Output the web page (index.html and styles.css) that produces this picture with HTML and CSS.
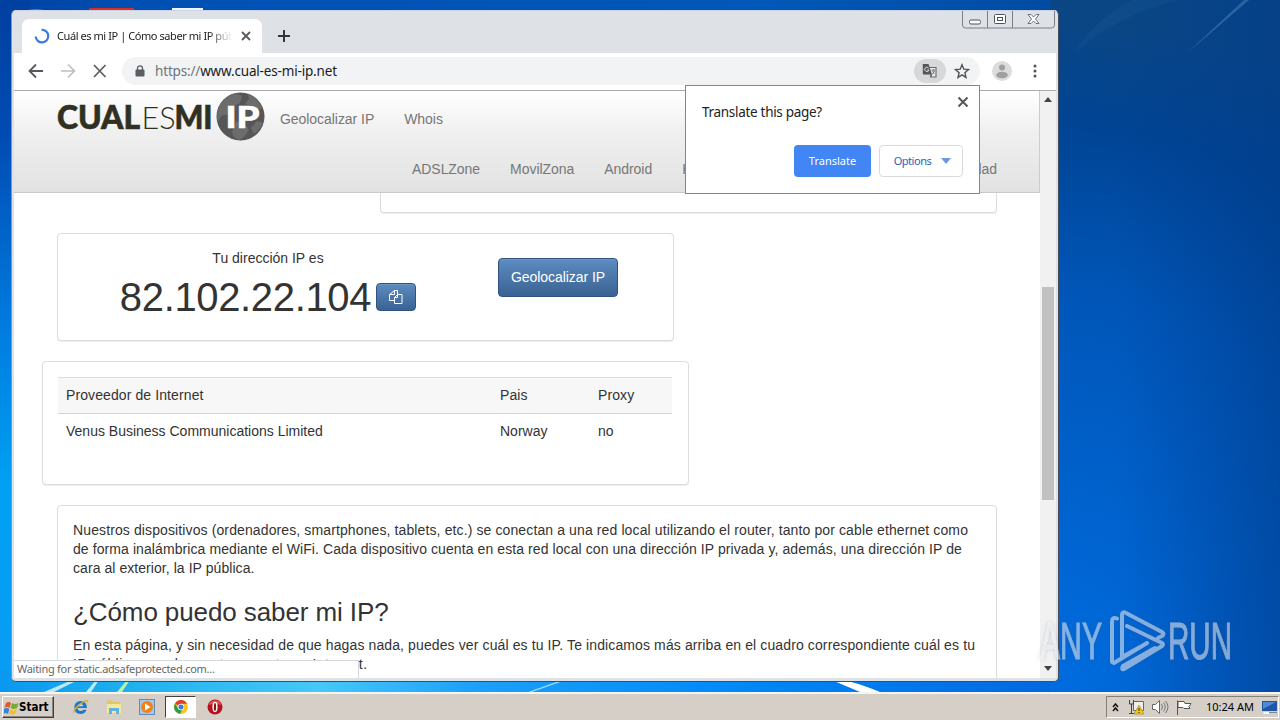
FILE: index.html
```html
<!DOCTYPE html>
<html lang="es">
<head>
<meta charset="utf-8">
<title>Cuál es mi IP</title>
<link rel="stylesheet" href="styles.css">
</head>
<body>
<div class="desktop">
  <svg class="wallpaper" width="1280" height="692" viewBox="0 0 1280 692">
    <defs>
      <linearGradient id="left" x1="0" y1="0" x2="0" y2="1"><stop offset="0" stop-color="#0040a0"/><stop offset=".2" stop-color="#004cb4"/><stop offset=".45" stop-color="#0078dc"/><stop offset=".7" stop-color="#00a0f4"/><stop offset="1" stop-color="#0a9cf4"/></linearGradient>
      <linearGradient id="top" x1="0" y1="0" x2="1" y2="0"><stop offset="0" stop-color="#0040a0"/><stop offset=".1" stop-color="#0050b4"/><stop offset=".6" stop-color="#0058b8"/><stop offset="1" stop-color="#004290"/></linearGradient>
      <linearGradient id="floor" x1="0" y1="0" x2="1" y2="0"><stop offset="0" stop-color="#0a98f0"/><stop offset=".12" stop-color="#1eb0ee"/><stop offset=".3" stop-color="#46c8f8"/><stop offset=".45" stop-color="#1ca0fa"/><stop offset=".7" stop-color="#0088f8"/><stop offset="1" stop-color="#0068de"/></linearGradient>
      <radialGradient id="right" gradientUnits="userSpaceOnUse" cx="1030" cy="700" r="680"><stop offset="0" stop-color="#006ee2"/><stop offset=".28" stop-color="#0063cf"/><stop offset=".6" stop-color="#0056b8"/><stop offset=".85" stop-color="#004494"/><stop offset="1" stop-color="#0a4684"/></radialGradient>
      <linearGradient id="edge" x1="0" y1="0" x2="1" y2="0"><stop offset=".3" stop-color="#003c90" stop-opacity="0"/><stop offset="1" stop-color="#003c8a" stop-opacity=".55"/></linearGradient>
    </defs>
    <rect width="1280" height="692" fill="url(#top)"/>
    <rect width="30" height="692" fill="url(#left)"/>
    <rect y="670" width="1060" height="22" fill="url(#floor)"/>
    <rect x="1050" width="230" height="692" fill="url(#right)"/>
    <rect x="1050" width="230" height="692" fill="url(#edge)"/>
    <path d="M1186 54 1244 0h5Z" fill="#6ca0d0" opacity=".35"/>
    <path d="M1075 52Q1120 14 1180 0h-48Q1092 22 1075 52Z" fill="#4a88c8" opacity=".07"/>
    <path d="M44 692 72 680h6l-24 12Z" fill="#e8f8ff" opacity=".8"/>
    <path d="M86 692 96 680h3l-8 12Z" fill="#bdeaff"/>
    <path d="M117 692 127 680h3l-8 12Z" fill="#b8f0b0"/>
    <path d="M528 692 562 680h4l-34 12Z" fill="#9cdcff"/>
    <path d="M834 681h14q18 5 32 11h-20Z" fill="#fff"/>
    <path d="M24 10.500q12-2 24 0Z" fill="#9cb4d8"/><path d="M89 8h45v3H89Z" fill="#e02a22"/><path d="M172 8h31v3h-31Z" fill="#eef4ff"/>
  </svg>

  <div class="window">
    <div class="tabstrip">
      <div class="tab">
        <svg class="spinner" width="16" height="16" viewBox="0 0 16 16"><path d="M7.600 1.800A6.300 6.300 0 1 1 1.700 8.500" fill="none" stroke="#3b78e7" stroke-width="2.200"/></svg>
        <span class="tab-title">Cuál es mi IP | Cómo saber mi IP púb</span>
        <svg width="10" height="10" viewBox="0 0 10 10"><path d="m1 1 8 8M9 1 1 9" stroke="#5a5d61" stroke-width="1.900"/></svg>
      </div>
      <svg class="newtab" width="12" height="12" viewBox="0 0 12 12"><path d="M6 0v12M0 6h12" stroke="#33363c" stroke-width="2"/></svg>
      <svg class="controls" width="93" height="18" viewBox="0 0 93 18">
        <path d="M.5 0v14q0 3 3 3h86q3 0 3-3V0M25.500 0v17M50.500 0v17" fill="none" stroke="#7c7f88"/>
        <rect x="7.500" y="9" width="11" height="4" rx="1.500" fill="#fff" stroke="#50525a"/>
        <rect x="32.500" y="3.500" width="11" height="9" rx="1" fill="#fff" stroke="#50525a"/><rect x="35.500" y="6.500" width="5" height="3" fill="none" stroke="#50525a"/>
        <path d="M66 3.500h3l2.500 2.500 2.500-2.500h3l-3.500 4.500 3.500 4.500h-3L71.500 10 69 12.500h-3L69.500 8Z" fill="#fff" stroke="#60636a" stroke-width=".9"/>
      </svg>
    </div>

    <div class="toolbar">
      <svg width="92" height="16" viewBox="0 0 92 16"><path d="M15 8H2M8 1.500 1.500 8 8 14.500" fill="none" stroke="#55585c" stroke-width="1.800"/><path d="M33 8h13M40 1.500 46.500 8 40 14.500" fill="none" stroke="#bbbdc0" stroke-width="1.600"/><path d="m66 2 11.500 12M77.500 2 66 14" stroke="#5c5f63" stroke-width="1.800"/></svg>
      <div class="omnibox">
        <svg width="10" height="13" viewBox="0 0 10 13"><rect y="4.500" x=".5" width="9" height="7" rx="1" fill="#5a5d62"/><path d="M2.500 5V3.300a2.500 2.500 0 0 1 5 0V5" fill="none" stroke="#5a5d62" stroke-width="1.300"/></svg>
        <span class="url"><span class="scheme">https://</span>www.cual-es-mi-ip.net</span>
        <span class="trans-chip"><svg width="16" height="16" viewBox="0 0 16 16"><path d="M6.500 4.500h7.500v9.500H8" fill="#eee" stroke="#66696e" stroke-width="1.100"/><path d="M1 1h5.500l3.500 10.500H1.500Q.8 11.500.8 10.500V1.500Z" fill="#53565b"/><path d="M6.600 5A2.200 2.200 0 1 0 7 7H5" fill="none" stroke="#d8dade"/><path d="M9.500 7H13M11.500 6v1M10 7.200l2.500 4M12.700 7.200q-.5 2-2.400 3.800M8 12l2-.5-1 2.500Z" stroke="#66696e" stroke-width=".8" fill="#53565b"/></svg></span>
        <svg width="16" height="16" viewBox="0 0 16 16"><path d="m8 1.800 1.800 4.400 4.700.4-3.600 3.100 1.100 4.700L8 11.900l-4 2.500 1.100-4.700L1.500 6.600l4.700-.4Z" fill="none" stroke="#505358" stroke-width="1.400"/></svg>
      </div>
      <svg width="20" height="20" viewBox="0 0 20 20"><circle cx="10" cy="10" r="10" fill="#dcdcdc"/><circle cx="10" cy="6.500" r="3" fill="#a0a0a0"/><ellipse cx="10" cy="14" rx="5.800" ry="3.200" fill="#a0a0a0"/></svg>
      <svg class="menu-dots" width="4" height="14" viewBox="0 0 4 14"><g fill="#505358"><circle cx="2" cy="2" r="1.500"/><circle cx="2" cy="7" r="1.500"/><circle cx="2" cy="12" r="1.500"/></g></svg>
    </div>

    <div class="viewport">
      <div class="page">
        <nav class="navbar">
          <div class="nav-top">
            <svg class="logo" width="209" height="50" viewBox="0 0 209 50">
              <g fill="#303022" font-family="Lato, sans-serif" font-size="32">
                <g stroke="#303022" stroke-width=".6"><text x="0" y="36.500" font-weight="900" textLength="83" lengthAdjust="spacingAndGlyphs">CUAL</text>
                <text x="117.500" y="36.500" font-weight="900" textLength="38" lengthAdjust="spacingAndGlyphs">MI</text></g>
                <text x="84.500" y="36.500" font-weight="300" textLength="34" lengthAdjust="spacingAndGlyphs">ES</text>
              </g>
              <circle cx="183.500" cy="24.500" r="24" fill="#565656"/>
              <path d="M165 10q5-7 14-9l6 3-2 7-8 4-4 7-7 2-3 6Q158 18 165 10Zm26-8q9 3 14 14l-6 2-5-4-6-2 4-5Zm-12 27 9 3 4 6-5 7-5 3q-6-2-7-8Zm21 0 6 2q-3 7-9 11l-3-6Z" fill="#6c6c6c"/>
              <text x="168.500" y="36" fill="#fff" stroke="#fff" stroke-width=".6" font-family="Lato, sans-serif" font-size="31" font-weight="900" textLength="34" lengthAdjust="spacingAndGlyphs">IP</text>
            </svg>
            <a>Geolocalizar IP</a><a>Whois</a>
          </div>
          <div class="nav-bottom"><a>ADSLZone</a><a>MovilZona</a><a>Android</a><a>HardZone</a><a class="last">Seguridad</a></div>
        </nav>
        <main class="content">
          <div class="well banner"></div>
          <section class="well ip-box">
            <div class="ip-main">
              <p>Tu dirección IP es</p>
              <div class="ip-row"><span class="ip">82.102.22.104</span><button class="btn copy"><svg width="16" height="14" viewBox="0 0 16 14"><g fill="none" stroke="#fff"><path d="M6.500 3.500v-3h3v5M6.500.5l-5 4v6h5M1.500 4.500h5v-4M6.500 10.500v-3l3-3h4.500v9H6.500ZM6.500 7.500h3v-3"/></g></svg></button></div>
            </div>
            <button class="btn geo">Geolocalizar IP</button>
          </section>
          <section class="well isp-box">
            <div class="row head"><span>Proveedor de Internet</span><span>Pais</span><span>Proxy</span></div>
            <div class="row"><span>Venus Business Communications Limited</span><span>Norway</span><span>no</span></div>
          </section>
          <article class="well article">
            <p><span class="l1">Nuestros dispositivos (ordenadores, smartphones, tablets, etc.) se conectan a una red local utilizando el router, tanto por cable ethernet como</span>
            <span class="l2">de forma inalámbrica mediante el WiFi. Cada dispositivo cuenta en esta red local con una dirección IP privada y, además, una dirección IP de</span>
            <span class="l3">cara al exterior, la IP pública.</span></p>
            <h2>¿Cómo puedo saber mi IP?</h2>
            <p><span class="l1">En esta página, y sin necesidad de que hagas nada, puedes ver cuál es tu IP. Te indicamos más arriba en el cuadro correspondiente cuál es tu</span>
            <span class="l5">IP pública, con la que te conectas a Internet.</span></p>
          </article>
        </main>
      </div>
      <div class="scrollbar">
        <svg width="8" height="5" viewBox="0 0 8 5"><path d="M0 5 4 0l4 5Z" fill="#444"/></svg>
        <div class="thumb"></div>
        <svg width="8" height="5" viewBox="0 0 8 5"><path d="M0 0h8L4 5Z" fill="#444"/></svg>
      </div>
    </div>
    <div class="status">Waiting for static.adsafeprotected.com...</div>
  </div>

  <div class="popup">
    <div class="popup-head"><span class="question">Translate this page?</span><svg width="12" height="12" viewBox="0 0 12 12"><path d="m1.500 1.500 9 9M10.500 1.500l-9 9" stroke="#55585c" stroke-width="2"/></svg></div>
    <div class="popup-actions"><button class="translate">Translate</button><button class="options">Options<svg width="10" height="6" viewBox="0 0 10 6"><path d="M0 0h10L5 6Z" fill="#6e98dc"/></svg></button></div>
  </div>

  <svg class="watermark" width="200" height="64" viewBox="0 0 200 64">
    <g fill="#fff" stroke="#fff" stroke-width="1.100" opacity=".5" font-family="'Liberation Sans Narrow', 'Liberation Sans', sans-serif" font-size="52">
      <text x="4" y="50" textLength="62" lengthAdjust="spacingAndGlyphs">ANY</text>
      <text x="132" y="50" textLength="64" lengthAdjust="spacingAndGlyphs">RUN</text>
    </g>
    <g opacity=".5"><path d="M81 9.500q-5-2-5 3V53l2 1 33-20M104 38 86 48V6q0-4 4-2l36 19q3 2 0 4l-4 2M91 17l35 17q2 1 0 3L88 60q-3 1-1-3l32-18" fill="none" stroke="#fff" stroke-width="4" stroke-linejoin="round" stroke-linecap="round"/></g>
  </svg>

  <div class="taskbar">
    <button class="start"><svg width="15" height="15" viewBox="0 0 15 15"><path d="M2 3q3-2 5 0L5.500 8Q3 6 .5 8Z" fill="#e45722"/><path d="M8 3q3 2 6.500 0L13 8Q10 10 6.500 8Z" fill="#75ad31"/><path d="M0 9q3-2 5.300 0L4 14q-3-2-4 0Z" fill="#3584cc"/><path d="M6.200 9.500q3 2 6.500 0l-1.500 4q-3 2-6.200 0Z" fill="#f5be25"/></svg>Start</button>
    <div class="launch">
      <svg width="17" height="16" viewBox="0 0 17 16"><path d="M15 9H5.500q.3 3 3.200 3 1.800 0 2.600-1.300h3.200Q13 15 8.500 15 2.300 14.500 2.300 8.500 2.600 2.200 8.700 2q6.300.4 6.300 7M5.500 7.200h5.800Q11 4.800 8.500 4.700 6 4.800 5.500 7.200" fill="#1c78d0"/><path d="M2 14.500Q-1 12 6 6q8-6.500 10-4.500 1 1-.8 3.500 1-3-1-2.500Q10 3.500 5 9q-4 5-3 5.500Z" fill="#d8b02c"/></svg>
      <svg width="16" height="16" viewBox="0 0 16 16"><path d="M1 3V1.500h5L7.500 3H14v11H1Z" fill="#e4c65c"/><path d="M1 5h14v9H1Z" fill="#f5e79b"/><path d="M3 15V9h10v6h-3v-3H6v3Z" fill="#60b3e0"/></svg>
      <svg width="16" height="16" viewBox="0 0 16 16"><rect x=".5" y=".5" width="15" height="15" fill="#a6c8e8" stroke="#5f8cb8"/><circle cx="8" cy="8" r="6" fill="#f08218"/><path d="m6 4.500 5.500 3.500L6 11.500Z" fill="#fff"/></svg>
      <span class="active"><svg width="14" height="14" viewBox="0 0 14 14"><circle cx="7" cy="7" r="7" fill="#f5c520"/><path d="M7 7 1 3.500A7 7 0 0 1 13.100 3.700H7Z" fill="#df3b2f"/><path d="M1 3.500 4.200 9 7 7l1 3-2 3.900A7 7 0 0 1 1 3.500Z" fill="#2b9c4b"/><circle cx="7" cy="7" r="3.200" fill="#fff"/><circle cx="7" cy="7" r="2.500" fill="#3978dc"/></svg></span>
      <svg width="16" height="16" viewBox="0 0 16 16"><circle cx="8" cy="8" r="7.500" fill="#b5121d"/><path d="M1.500 6a7 7 0 0 1 13 0Q8 4 1.500 6Z" fill="#e05050"/><ellipse cx="8" cy="8" rx="2.600" ry="5.200" fill="#fff"/><ellipse cx="8" cy="8" rx="1.100" ry="4" fill="#8c1018"/></svg>
    </div>
    <div class="tray">
      <svg width="7" height="9" viewBox="0 0 7 9"><path d="M1 4l2.500-3L6 4M1 8l2.500-3L6 8" fill="none" stroke="#111" stroke-width="1.500"/></svg>
      <svg class="net" width="17" height="16" viewBox="0 0 17 16"><path d="M5.500 2.500h10v9h-10Z" fill="#eee" stroke="#666"/><path d="M1.500 1v4h4V1M3.500 5v10M1 14.500h7" fill="none" stroke="#444"/><path d="m11 6 5 9H6Z" fill="#f4c812" stroke="#a98708" stroke-width=".6"/><path d="M11 9v3m0 1v1" stroke="#222"/></svg>
      <svg width="17" height="14" viewBox="0 0 17 14"><path d="M.5 4.500h3l4-4v13l-4-4h-3Z" fill="#fff" stroke="#666"/><path d="M9.500 4q2 3 0 6M11.500 2.500q3.500 4.500 0 9M13.500 1q5 6 0 12" fill="none" stroke="#777"/></svg>
      <svg class="flag" width="16" height="15" viewBox="0 0 16 15"><path d="M1.500 15V.5M2 1.500h6l1 2h6l-2 3 1 2H8l-1-1H2Z" fill="#fff" stroke="#555"/></svg>
      <span class="clock">10:24 AM</span>
      <svg width="15" height="13" viewBox="0 0 15 13"><path d="M0 0h15v10H0Z" fill="#2054a8"/><path d="M1 1h13L1 8Z" fill="#4e8ad8"/><path d="M2 11h5v2H1Z" fill="#f4f8ff"/><path d="M7 11h8v1H7Z" fill="#789"/></svg>
    </div>
  </div>
</div>
</body>
</html>
```
FILE: styles.css
```css
* { box-sizing: border-box; }
body { margin: 0; font-family: "Liberation Sans", Arial, sans-serif; font-size: 14px; color: #333; }
svg { display: block; flex: none; }
button { font: inherit; padding: 0; margin: 0; }
p { margin: 0; }
.desktop { position: relative; width: 1280px; height: 720px; overflow: hidden; display: flex; flex-direction: column; justify-content: flex-end; }
.wallpaper { position: absolute; left: 0; top: 0; }

.window { position: absolute; left: 11px; top: 10px; width: 1048px; height: 672px; padding: 0 2px 3px; background: #dee1e6; border: 1px solid #454c5c; border-top-color: #c9d3e4; border-left-color: #8496ac; border-radius: 5px; display: flex; flex-direction: column; }
.tabstrip { height: 42px; display: flex; align-items: flex-start; flex: none; padding-left: 8px; }
.tab { width: 240px; height: 34px; margin-top: 8px; background: #fff; border-radius: 7px 7px 0 0; display: flex; align-items: center; padding: 0 11px 0 12px; font-family: "Noto Sans", sans-serif; font-size: 11px; color: #222; }
.tab-title { width: 175px; margin: -2px 9px 0 7px; flex: none; overflow: hidden; white-space: nowrap; letter-spacing: -.43px; -webkit-mask-image: linear-gradient(90deg, #000 87%, transparent); mask-image: linear-gradient(90deg, #000 87%, transparent); }
.newtab { margin: 19px auto 0 16px; }
.controls { margin-right: 1px; }

.toolbar { height: 38px; flex: none; background: #fff; border-bottom: 1px solid #aaa; display: flex; align-items: center; padding: 0 19px 1px 14px; }
.omnibox { width: 858px; height: 28px; margin-left: 2px; border-radius: 14px; background: #f1f3f4; display: flex; align-items: center; padding: 0 10px 0 13px; }
.url { margin-left: 10px; margin-right: auto; font-family: "Noto Sans", sans-serif; font-size: 13.500px; letter-spacing: -.17px; color: #1c1c1c; }
.scheme { color: #70757a; }
.trans-chip { width: 32px; height: 24px; border-radius: 12px; background: #d6d8da; display: flex; align-items: center; justify-content: center; margin-right: 8px; }
.omnibox + svg { margin-left: 12px; }
.menu-dots { margin-left: auto; }

.viewport { flex: 1; min-height: 0; display: flex; }
.page { width: 1026px; background: #fff; overflow: hidden; }
.navbar { height: 102px; background: linear-gradient(#fff, #f0f0f0 40%, #e2e2e2); border-bottom: 1px solid #c9c9c9; border-right: 1px solid #ccc; color: #777; overflow: hidden; letter-spacing: -.05px; }
.nav-top { height: 50px; display: flex; align-items: center; padding: 2px 0 0 43px; gap: 30px; }
.nav-top a { padding-top: 4px; }
.logo { margin-right: -16px; }
.nav-bottom { height: 50px; display: flex; align-items: center; padding: 6px 42px 0 398px; gap: 30px; }
.nav-bottom .last { margin-left: auto; }
.content { padding: 0 43px 0 28px; }
.well { background: #fff; border: 1px solid #ddd; border-radius: 4px; box-shadow: 0 1px 1px rgba(0, 0, 0, .08); }
.banner { height: 20px; margin-left: 338px; border-top: 0; border-radius: 0 0 4px 4px; }
.ip-box { width: 617px; height: 108px; margin: 20px 0 0 15px; display: flex; }
.ip-main { width: 420px; padding-top: 16px; text-align: center; }
.ip-row { display: flex; align-items: center; justify-content: center; gap: 5px; height: 44px; margin-top: 9px; }
.ip { font-size: 40px; letter-spacing: -.35px; line-height: 42px; }
.btn { color: #fff; border: 1px solid #2e5380; border-radius: 4px; background: linear-gradient(#5c8cc0, #3a6293); box-shadow: inset 0 1px 0 #6b96c6; display: flex; align-items: center; justify-content: center; }
.copy { width: 40px; height: 28px; }
.geo { width: 120px; height: 39px; margin: 24px 0 0 20px; padding-bottom: 2px; letter-spacing: -.05px; }
.isp-box { width: 647px; height: 124px; margin-top: 20px; padding: 15px 16px 15px 15px; }
.row { height: 36px; display: grid; grid-template-columns: 434px 98px 1fr; align-items: center; padding: 0 0 2px 8px; }
.row.head { height: 37px; background: #f7f7f7; border-top: 1px solid #ddd; border-bottom: 1px solid #d5d5d5; letter-spacing: .1px; }
.article { height: 220px; margin: 20px 0 0 15px; padding: 15px; line-height: 19px; }
.article span { display: block; white-space: nowrap; }
.article .l1 { letter-spacing: .115px; }
.article .l2 { letter-spacing: .085px; }
.article .l3 { letter-spacing: .06px; }
.article .l5 { letter-spacing: .4px; }
.article h2 { margin: 18px 0 8px; font-size: 26px; letter-spacing: -.1px; line-height: 32px; font-weight: 400; white-space: nowrap; }

.scrollbar { width: 16px; background: #f1f1f1; display: flex; flex-direction: column; align-items: center; padding: 6px 0 7px; }
.thumb { width: 12px; height: 213px; margin: 185px 0 auto; background: #c1c1c1; }
.status { position: absolute; left: 2px; bottom: 3px; width: 345px; height: 18px; background: #fff; border: 1px solid #d5d8dc; border-width: 1px 1px 0 0; padding-left: 3px; font: 11px/16px "Noto Sans", sans-serif; letter-spacing: -.28px; color: #666; white-space: nowrap; }

.popup { position: absolute; left: 685px; top: 85px; width: 295px; height: 109px; background: #fff; border: 1px solid #858585; padding: 10px 16px 0; font-family: "Noto Sans", sans-serif; }
.popup-head { display: flex; justify-content: space-between; height: 49px; margin-right: -6px; color: #222; }
.question { line-height: 32px; font-size: 13.500px; letter-spacing: -.3px; }
.popup-actions { display: flex; justify-content: flex-end; gap: 8px; font-size: 11px; letter-spacing: -.3px; }
.translate, .options { height: 32px; border-radius: 4px; display: flex; align-items: center; justify-content: center; padding-bottom: 1px; }
.translate { width: 77px; background: #4285f4; border: 0; color: #fff; }
.options { width: 84px; background: #fff; border: 1px solid #d8dade; color: #2a62bc; gap: 10px; padding-left: 3px; letter-spacing: -.45px; }
.watermark { position: absolute; left: 1036px; top: 609px; overflow: visible; filter: drop-shadow(0 0 2px rgba(60, 70, 90, .4)); }

.taskbar { position: relative; height: 28px; background: #d6cfc8; border-top: 2px solid #f6f4f0; display: flex; align-items: center; padding: 0 1px 0 2px; }
.start { width: 52px; height: 22px; background: #d6cfc8; border: 1px solid; border-color: #fff #404040 #404040 #fff; box-shadow: inset -1px -1px #8a8580; display: flex; align-items: center; padding-left: 1px; font: bold 11.500px "DejaVu Sans Condensed", "DejaVu Sans", sans-serif; color: #000; }
.launch { display: flex; align-items: center; margin-left: 18px; gap: 17px; }
.active { width: 31px; height: 22px; margin: 0 -6px 0 -7px; background: #fff; border: 1px solid; border-color: #404040 #fff #fff #404040; display: flex; align-items: center; justify-content: center; }
.tray { width: 173px; height: 22px; margin-left: auto; border: 1px solid; border-color: #868078 #fff #fff #868078; display: flex; align-items: center; padding: 0 1px 0 5px; font: 11px "Noto Sans", sans-serif; color: #000; }
.net { margin: 0 7px 0 9px; }
.flag { margin: 0 auto 0 7px; }
.clock { margin-right: 8px; padding-bottom: 2px; white-space: nowrap; }
```
